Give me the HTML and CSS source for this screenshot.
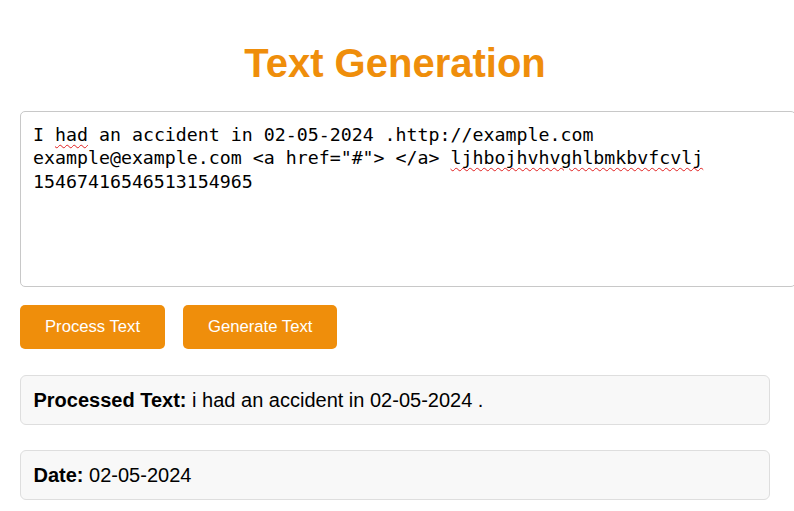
FILE: index.html
```html
<!DOCTYPE html>
<html lang="en">
<head>
<meta charset="utf-8">
<title>Text Generation</title>
<link rel="stylesheet" href="styles.css">
</head>
<body>
<main class="container">
  <h1 class="title">Text Generation</h1>
  <div class="input" role="textbox" aria-multiline="true" contenteditable="true" spellcheck="false">I <span class="misspelled">had</span> an accident in 02-05-2024 .http://example.com example@example.com &lt;a href="#"&gt; &lt;/a&gt; <span class="misspelled">ljhbojhvhvghlbmkbvfcvlj</span> 15467416546513154965</div>
  <div class="actions">
    <button class="btn" type="button">Process Text</button>
    <button class="btn" type="button">Generate Text</button>
  </div>
  <div class="result"><strong>Processed Text:</strong> i had an accident in 02-05-2024 .</div>
  <div class="result"><strong>Date:</strong> 02-05-2024</div>
</main>
</body>
</html>
```
FILE: styles.css
```css
html, body {
  margin: 0;
  background: #ffffff;
}

body {
  padding: 20px;
  font-family: "Liberation Sans", Arial, sans-serif;
  font-size: 20px;
  color: #000000;
  overflow: hidden;
}

.container {
  max-width: 750px;
}

.title {
  margin: 20px 0 25px;
  text-align: center;
  font-size: 40px;
  font-weight: bold;
  line-height: 46px;
  color: #ef8e0b;
}

.input {
  box-sizing: border-box;
  width: 776px;
  height: 176px;
  padding: 11px 12px;
  border: 1px solid #c8c8c8;
  border-radius: 5px;
  font-family: "DejaVu Sans Mono", "Liberation Mono", monospace;
  font-size: 18.25px;
  line-height: 23.4px;
  color: #000000;
  outline: none;
  word-wrap: break-word;
}

.misspelled {
  text-decoration: underline wavy #e02020;
  text-decoration-thickness: 1px;
  text-underline-offset: 3px;
}

.actions {
  display: flex;
  gap: 18px;
  margin-top: 18px;
}

.btn {
  height: 44px;
  padding: 0 25px;
  border: none;
  border-radius: 5px;
  background: #ef8e0b;
  color: #ffffff;
  font-family: "Liberation Sans", Arial, sans-serif;
  font-size: 16.67px;
  cursor: pointer;
}

.result {
  margin-top: 26px;
  padding: 12.5px;
  border: 1px solid #dedede;
  border-radius: 6px;
  background: #f8f8f8;
  line-height: 23px;
}

.result + .result {
  margin-top: 25px;
}
```
